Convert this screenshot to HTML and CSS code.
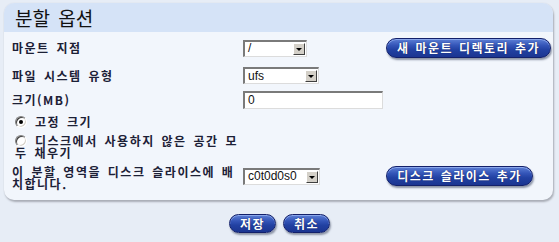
FILE: index.html
```html
<!DOCTYPE html>
<html lang="ko">
<head>
<meta charset="utf-8">
<title>분할 옵션</title>
<link rel="stylesheet" href="styles.css">
</head>
<body>
<div class="panel">
  <div class="panel-head"><h1 class="title">분할 옵션</h1></div>
  <div class="panel-body">
    <div class="row row-1">
      <div class="label">마운트 지점</div>
      <div class="ctrl">
        <div class="select sel-mount"><span class="sel-text">/</span><span class="sel-arrow"></span></div>
      </div>
      <button class="btn btn-mount">새 마운트 디렉토리 추가</button>
    </div>
    <div class="row row-2">
      <div class="label">파일 시스템 유형</div>
      <div class="ctrl">
        <div class="select sel-fs"><span class="sel-text">ufs</span><span class="sel-arrow"></span></div>
      </div>
    </div>
    <div class="row row-3">
      <div class="label">크기(MB)</div>
      <div class="ctrl">
        <div class="input"><span class="sel-text">0</span></div>
      </div>
    </div>
    <div class="row row-4">
      <div class="label radio-label"><span class="radio checked"></span>고정 크기</div>
    </div>
    <div class="row row-5">
      <div class="label radio-label"><span class="radio"></span>디스크에서 사용하지 않은 공간 모두 채우기</div>
    </div>
    <div class="row row-6">
      <div class="label">이 분할 영역을 디스크 슬라이스에 배치합니다.</div>
      <div class="ctrl">
        <div class="select sel-slice"><span class="sel-text">c0t0d0s0</span><span class="sel-arrow"></span></div>
      </div>
      <button class="btn btn-slice">디스크 슬라이스 추가</button>
    </div>
  </div>
</div>
<div class="actions">
  <button class="btn btn-small">저장</button>
  <button class="btn btn-small">취소</button>
</div>
</body>
</html>
```
FILE: styles.css
```css
html, body {
  margin: 0;
  padding: 0;
}
body {
  width: 559px;
  height: 242px;
  background: #e7edf6;
  font-family: "Noto Sans CJK KR", "Liberation Sans", sans-serif;
  color: #1c2036;
  overflow: hidden;
}
.panel {
  margin: 3px 0 0 4px;
  width: 549px;
  height: 197px;
  background: #f2f6fc;
  border-radius: 10px;
  box-shadow: 1px 2px 2px #a9adb6, 0 0 1px #c3c8d2;
  overflow: hidden;
}
.panel-head {
  height: 29px;
  background: #d5e3f7;
  display: flex;
  align-items: center;
  padding-left: 11px;
}
.title {
  margin: 0;
  font-size: 19px;
  font-weight: 400;
  color: #111;
  word-spacing: 3px;
  line-height: 20px;
}
.panel-body {
  padding: 4px 0 0 8px;
}
.row {
  display: flex;
  align-items: center;
  font-size: 12px;
  font-weight: 700;
  letter-spacing: 1.5px;
  word-spacing: 2px;
  line-height: 12px;
}
.row-1 { height: 24px; }
.row-2 { height: 23px; margin-top: 4px; }
.row-3 { height: 21px; margin-top: 2px; }
.row-4 { height: 16px; margin-top: 4px; }
.row-5 { height: 24px; margin-top: 5px; }
.row-6 { height: 24px; margin-top: 5px; }
.label {
  width: 231px;
  flex: none;
}
.row-6 .label {
  padding-top: 3px;
}
.radio-label {
  padding-left: 3px;
  box-sizing: border-box;
}
.radio {
  display: inline-block;
  width: 12px;
  height: 12px;
  margin-right: 8px;
  vertical-align: -1px;
  border-radius: 50%;
  background: #fff;
  border-top: 1px solid #808080;
  border-left: 1px solid #808080;
  border-right: 1px solid #fff;
  border-bottom: 1px solid #fff;
  box-shadow: inset 1px 1px 0 #404040, inset -1px -1px 0 #d4d0c8;
  box-sizing: border-box;
  position: relative;
}
.radio.checked::after {
  content: "";
  position: absolute;
  left: 3px;
  top: 3px;
  width: 4px;
  height: 4px;
  border-radius: 50%;
  background: #000;
}
.ctrl {
  width: 143px;
  flex: none;
}
.select, .input {
  display: flex;
  align-items: center;
  height: 17px;
  box-sizing: border-box;
  background: #fff;
  border-top: 2px solid #7a7a7a;
  border-left: 2px solid #7a7a7a;
  border-right: 1px solid #dcdcdc;
  border-bottom: 1px solid #dcdcdc;
  font-family: "Liberation Sans", sans-serif;
  font-weight: 400;
  font-size: 12px;
  letter-spacing: 0;
  word-spacing: 0;
  color: #111;
}
.sel-text {
  flex: 1;
  padding-left: 3px;
  line-height: 13px;
}
.sel-arrow {
  width: 12px;
  height: 12px;
  margin-right: 1px;
  background: #d4d0c8;
  border-top: 1px solid #fff;
  border-left: 1px solid #fff;
  border-right: 1px solid #404040;
  border-bottom: 1px solid #404040;
  box-sizing: border-box;
  position: relative;
}
.sel-arrow::after {
  content: "";
  position: absolute;
  left: 2px;
  top: 4px;
  border-left: 3px solid transparent;
  border-right: 3px solid transparent;
  border-top: 3px solid #000;
}
.sel-mount { width: 64px; }
.sel-fs { width: 76px; }
.sel-slice { width: 77px; height: 17px; }
.input { width: 140px; height: 18px; }
.btn {
  font-family: "Noto Sans CJK KR", sans-serif;
  font-size: 12px;
  font-weight: 700;
  letter-spacing: 1.5px;
  word-spacing: 1px;
  color: #fff;
  height: 20px;
  padding: 0;
  line-height: 16px;
  border: 1px solid #13206a;
  border-radius: 10px;
  background: linear-gradient(#5d80d6 0%, #3455b8 35%, #2241a2 60%, #1b3591 100%);
  box-shadow: inset 0 1px 0 #8aa6ea, 1px 2px 2px #8c94a6;
  text-shadow: 0 0 1px #0c1650;
  cursor: pointer;
}
.btn-mount { width: 165px; }
.btn-slice { width: 147px; }
.actions {
  display: flex;
  justify-content: center;
  gap: 7px;
  margin-top: 14px;
}
.btn-small { width: 47px; height: 19px; }
```
